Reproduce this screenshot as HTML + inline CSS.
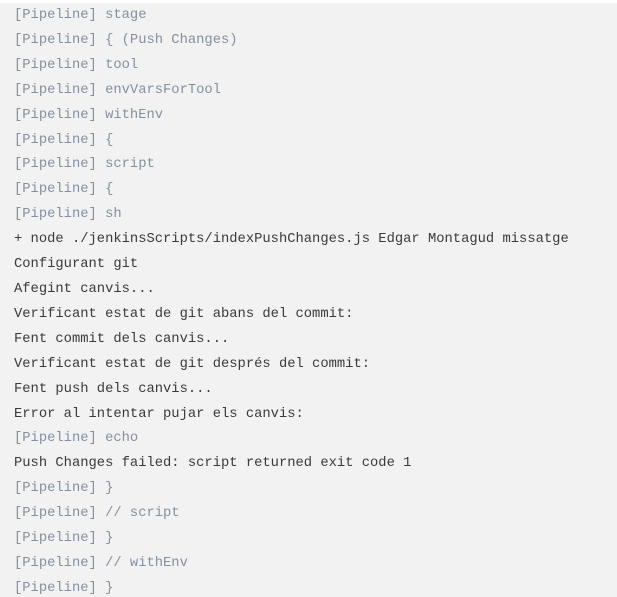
<!DOCTYPE html>
<html><head><style>
html,body{margin:0;padding:0;background:#fff;}
.box{position:absolute;left:0;top:3px;width:617px;height:594px;background:#f2f2f2;overflow:hidden;}
pre{margin:0;position:absolute;left:14px;top:1px;font-family:"Liberation Mono",monospace;font-size:13.8px;line-height:24.9px;color:#3a3a3a;}
.p{color:#8390a0;}
</style></head><body><div class="box"><pre><span class="p">[Pipeline] stage
[Pipeline] { (Push Changes)
[Pipeline] tool
[Pipeline] envVarsForTool
[Pipeline] withEnv
[Pipeline] {
[Pipeline] script
[Pipeline] {
[Pipeline] sh</span>
+ node ./jenkinsScripts/indexPushChanges.js Edgar Montagud missatge
Configurant git
Afegint canvis...
Verificant estat de git abans del commit:
Fent commit dels canvis...
Verificant estat de git després del commit:
Fent push dels canvis...
Error al intentar pujar els canvis:
<span class="p">[Pipeline] echo</span>
Push Changes failed: script returned exit code 1
<span class="p">[Pipeline] }
[Pipeline] // script
[Pipeline] }
[Pipeline] // withEnv
[Pipeline] }</span></pre></div></body></html>
